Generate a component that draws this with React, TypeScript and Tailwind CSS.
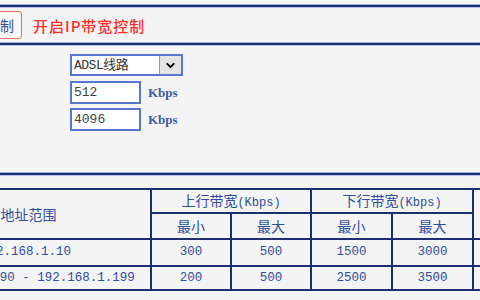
import { ChevronDown } from "lucide-react"

function Rule() {
    return (
        <div className="flex flex-col">
            <div className="h-px bg-[#9fb0da]" />
            <div className="h-[2px] bg-[#1d2f72]" />
            <div className="h-px bg-[#b9c5e6]" />
        </div>
    )
}

const cell = "border-2 border-[#1d2f72] text-center p-0"
const mono = "font-['Liberation_Mono','Noto_Sans_CJK_SC',monospace]"

const rows = [
    { range: "192.168.1.10", upMin: "300", upMax: "500", downMin: "1500", downMax: "3000" },
    { range: "192.168.1.190 - 192.168.1.199", upMin: "200", upMax: "500", downMin: "2500", downMax: "3500" },
]

export default function App() {
    return (
        <div className="w-[480px] h-[300px] overflow-hidden bg-[#f4f4f4] font-['Noto_Sans_CJK_SC',sans-serif] pt-[4px]">
            <Rule />

            <div className="h-[34px] flex items-center">
                <div className="ml-[-8px] w-[30px] h-[28px] border-[1.5px] border-[#f26a6a] rounded-[3px] bg-[#f8f8f8] flex items-center justify-end pr-[7px]">
                    <span className="text-[14px] leading-none text-[#2f4d9c]">制</span>
                </div>
                <p className="ml-[11px] text-[15px] leading-none font-medium tracking-[1px] text-[#ff2d2d] whitespace-nowrap">开启IP带宽控制</p>
            </div>

            <Rule />

            <div className="h-[126px] pt-[8px] pl-[70px] flex flex-col gap-[4px]">
                <div className="w-[113px] h-[22px] border-2 border-[#5676d2] bg-white flex items-center mb-[1px]">
                    <span className={`flex-1 pl-[2px] text-[13px] leading-none text-[#333] ${mono} tracking-[-0.5px]`}>ADSL线路</span>
                    <div className="w-[22px] h-full bg-[#e4e4e4] border-l border-[#9a9a9a] flex items-center justify-center">
                        <ChevronDown size={13} strokeWidth={3.5} className="text-black" />
                    </div>
                </div>
                {["512", "4096"].map((v) => (
                    <div key={v} className="flex items-center gap-[7px]">
                        <div className="w-[71px] h-[23px] border-2 border-[#5676d2] bg-white flex items-center pl-[2px]">
                            <span className={`text-[13px] leading-none text-[#444] ${mono}`}>{v}</span>
                        </div>
                        <span className="text-[13px] font-bold text-[#3c5aa6] font-['Liberation_Serif',serif]">Kbps</span>
                    </div>
                ))}
            </div>

            <Rule />

            <div className="mt-[12px]">
                <table className="ml-[-100px] w-[652px] border-collapse table-fixed text-[#2f4d9c]">
                    <colgroup>
                        <col className="w-[250px]" />
                        <col className="w-[80px]" />
                        <col className="w-[80px]" />
                        <col className="w-[81px]" />
                        <col className="w-[81px]" />
                        <col className="w-[80px]" />
                    </colgroup>
                    <tbody>
                        <tr className="h-[24px]">
                            <td rowSpan={2} className={`${cell} text-[14px] pr-[8px]`}>IP地址范围</td>
                            <td colSpan={2} className={`${cell} text-[14px]`}>
                                上行带宽<span className={`${mono} text-[12px]`}>(Kbps)</span>
                            </td>
                            <td colSpan={2} className={`${cell} text-[14px]`}>
                                下行带宽<span className={`${mono} text-[12px]`}>(Kbps)</span>
                            </td>
                            <td rowSpan={2} className={cell} />
                        </tr>
                        <tr className="h-[26px]">
                            <td className={`${cell} text-[14px]`}>最小</td>
                            <td className={`${cell} text-[14px]`}>最大</td>
                            <td className={`${cell} text-[14px]`}>最小</td>
                            <td className={`${cell} text-[14px]`}>最大</td>
                        </tr>
                        {rows.map((r, i) => (
                            <tr key={r.range} className={i === 0 ? "h-[27px]" : "h-[24px]"}>
                                <td className={`${cell} ${mono} text-[12.5px]`}>{r.range}</td>
                                <td className={`${cell} ${mono} text-[12.5px]`}>{r.upMin}</td>
                                <td className={`${cell} ${mono} text-[12.5px]`}>{r.upMax}</td>
                                <td className={`${cell} ${mono} text-[12.5px]`}>{r.downMin}</td>
                                <td className={`${cell} ${mono} text-[12.5px]`}>{r.downMax}</td>
                                <td className={cell} />
                            </tr>
                        ))}
                    </tbody>
                </table>
            </div>
        </div>
    )
}
